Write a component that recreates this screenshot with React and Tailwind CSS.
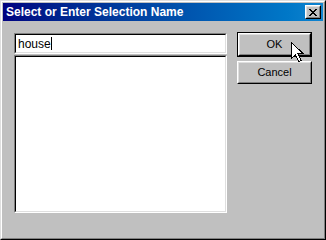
import React from 'react';

const raised = 'border border-t-white border-l-white border-r-black border-b-black';
const raisedInner = 'border border-t-[#dfdfdf] border-l-[#dfdfdf] border-r-[#808080] border-b-[#808080]';
const sunken = 'border border-t-[#808080] border-l-[#808080] border-r-white border-b-white';
const sunkenInner = 'border border-t-black border-l-black border-r-[#dfdfdf] border-b-[#dfdfdf]';

const Button = ({ label, isDefault }) => {
  const face = (
    <div className={`${raised} w-full h-full`}>
      <div className={`${raisedInner} w-full h-full flex items-center justify-center bg-[#c0c0c0] text-[11px] text-black`}>
        {label}
      </div>
    </div>
  );
  if (isDefault) {
    return <div className="w-[75px] h-[25px] border border-black">{face}</div>;
  }
  return <div className="w-[75px] h-[23px]">{face}</div>;
};

const Cursor = () => (
  <svg className="absolute left-[290px] top-[41px]" width="13" height="21" viewBox="0 0 13 21">
    <path
      d="M0.5 0.5 L0.5 16.5 L4.5 12.5 L7.5 19.5 L10 18.5 L7 11.5 L12 11.5 Z"
      fill="white"
      stroke="black"
      strokeWidth="1"
      shapeRendering="crispEdges"
    />
  </svg>
);

export default function App() {
  return (
    <div
      className="relative w-[326px] h-[240px] bg-[#c0c0c0] border border-t-[#dfdfdf] border-l-[#dfdfdf] border-r-black border-b-black"
      style={{ fontFamily: '"Liberation Sans", Arial, sans-serif' }}
    >
      <div className="w-full h-full flex flex-col border border-t-white border-l-white border-r-[#808080] border-b-[#808080] p-px">
        {/* title bar */}
        <div className="h-[18px] flex items-center justify-between pl-[3px] pr-[2px] bg-gradient-to-r from-[#000080] to-[#1084d0]">
          <span className="text-white font-bold text-[12px] leading-none">Select or Enter Selection Name</span>
          <div className={`${raised} w-[16px] h-[14px]`}>
            <div className={`${raisedInner} w-full h-full bg-[#c0c0c0] flex items-center justify-center`}>
              <svg width="8" height="7" viewBox="0 0 8 7" shapeRendering="crispEdges">
                <path d="M0 0h2v1h-2zM6 0h2v1h-2zM1 1h2v1h-2zM5 1h2v1h-2zM2 2h4v1h-4zM3 3h2v1h-2zM2 4h4v1h-4zM1 5h2v1h-2zM5 5h2v1h-2zM0 6h2v1h-2zM6 6h2v1h-2z" fill="black" />
              </svg>
            </div>
          </div>
        </div>

        {/* body */}
        <div className="flex pl-[11px] pt-[12px] gap-[10px]">
          <div className="flex flex-col w-[213px]">
            <div className={`${sunken} h-[21px]`}>
              <div className={`${sunkenInner} h-full bg-white flex items-center pl-[2px]`}>
                <span className="text-[12px] text-black leading-none">house</span>
                <span className="w-px h-[13px] bg-black" />
              </div>
            </div>
            <div className={`${sunken} h-[158px] mt-px`}>
              <div className={`${sunkenInner} h-full bg-white`} />
            </div>
          </div>
          <div className="flex flex-col gap-[4px] -mt-px">
            <Button label="OK" isDefault />
            <Button label="Cancel" />
          </div>
        </div>
      </div>
      <Cursor />
    </div>
  );
}
